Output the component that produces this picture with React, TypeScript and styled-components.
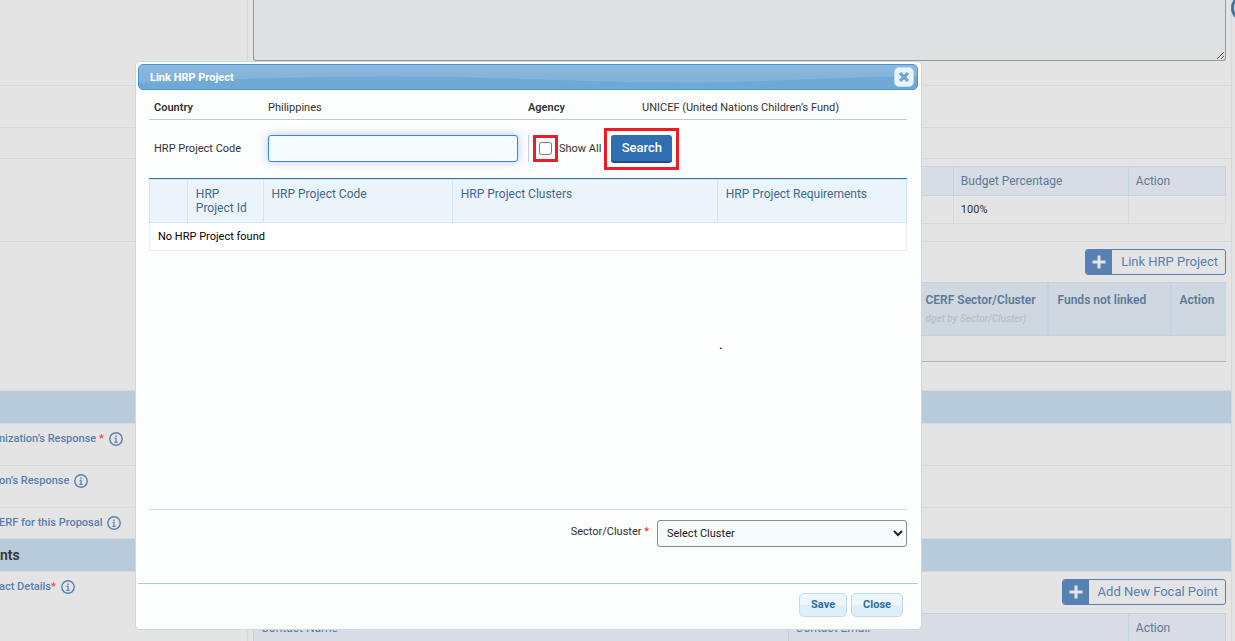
import React from "react";
import styled, { createGlobalStyle } from "styled-components";

const GlobalStyle = createGlobalStyle`
  *, *::before, *::after { box-sizing: border-box; }
  body {
    margin: 0;
    overflow: hidden;
    background: #e4e4e4;
    color: #333;
    font: 11px/14px Roboto, "Liberation Sans", sans-serif;
  }
  button, input, select, textarea { font: inherit; margin: 0; }
  table { border-collapse: collapse; }
`;

const line = "#d8d8d8";

/* ---------- Proposal form behind the dialog ---------- */

const Page = styled.main`
  position: relative;
  height: 100vh;
  overflow: hidden;
  padding-right: 3px;
`;

const Form = styled.form`
  border-right: 1px solid ${line};
`;

const Row = styled.div<{ $height: number }>`
  display: grid;
  grid-template-columns: 248px 1fr;
  min-height: ${(p) => p.$height}px;
  border-bottom: 1px solid ${line};
`;

const LabelCell = styled.div`
  display: flex;
  align-items: flex-start;
  padding-top: 8px;
  border-right: 1px solid ${line};
`;

const FieldLabel = styled.span`
  margin-left: -1px;
  color: #5681b2;
  font-weight: 500;
`;

const Required = styled.span<{ $muted?: boolean }>`
  color: ${(p) => (p.$muted ? "#f0484c" : "#fb2020")};
`;

const Field = styled.div`
  display: flex;
  flex-direction: column;
  padding: 7px 5px 0;
`;

const FlushField = styled(Field)`
  padding-top: 0;
`;

const SectionBand = styled.h2`
  height: 33px;
  margin: 0;
  background: #b8cbdb;
  border-bottom: 1px solid ${line};
  color: #333;
  font-size: 14px;
  font-weight: 600;
  line-height: 32px;
`;

const Narrative = styled.textarea`
  display: block;
  width: 100%;
  height: 61px;
  border: 1px solid #999;
  border-top: 0;
  border-radius: 0 0 3px 3px;
  background: #dde1e2;
`;

const FormTable = styled.table`
  width: 100%;
  table-layout: fixed;

  th, td {
    padding: 7px;
    border: 1px solid ${line};
    text-align: left;
    vertical-align: top;
    height: 28px;
  }
  td { padding: 7px 7px 6px; }
  th {
    height: 29px;
    border-color: #c5d3e0;
    background: #d8dce4;
    color: #5b7a98;
    font-size: 12px;
    font-weight: 400;
  }
`;

const FocalTable = styled(FormTable)`
  margin-top: 1px;
`;

const LinkedTable = styled(FormTable)`
  th {
    height: 53px;
    padding: 10px 8px 0 9px;
    border-width: 1px 2px;
    background: #cfd7e1;
    font-weight: 600;
  }
  th:first-child, th.joined { border-right-width: 0; border-left-width: 0; }
  th.joined { padding-left: 10px; }
  th:last-child { padding-left: 8px; border-right-width: 1px; }
  td {
    height: 26px;
    border-bottom-color: #b4b4b4;
    background: #e1e1e1;
  }
`;

const HeaderHint = styled.em`
  display: block;
  margin-top: 5px;
  color: #bcbfc2;
  font-size: 10px;
  font-weight: 500;
  white-space: nowrap;
`;

const AddButton = styled.button`
  display: flex;
  align-self: flex-end;
  height: 26px;
  margin-bottom: 7px;
  padding: 0;
  overflow: hidden;
  border: 1px solid #5681b2;
  border-radius: 3px;
  background: transparent;
  color: #5681b2;
  font-size: 13px;
  line-height: 23px;
`;

const AddIcon = styled.span`
  display: grid;
  place-items: center;
  width: 26px;
  height: 24px;
  background: #5681b2;
`;

const AddText = styled.span`
  padding: 0 7px 0 9px;
`;

const InfoButton = styled.button`
  display: flex;
  margin: 0 0 0 5px;
  padding: 0;
  border: 0;
  background: none;
`;

const HelpRing = styled.div`
  position: absolute;
  top: -6px;
  right: -24px;
  width: 28px;
  height: 28px;
  border: 3px solid #3d74a3;
  border-radius: 50%;
  background: #e4e4e4;
`;

/* ---------- Dialog ---------- */

const Overlay = styled.div`
  position: fixed;
  inset: 0;
  padding: 61px 0 0 135px;
`;

const Dialog = styled.section`
  width: 787px;
  max-width: 100%;
  padding: 2px 3px 3px 2px;
  border: 1px solid #c5dbec;
  border-radius: 5px;
  background: #fcfdfd;
`;

const TitleBar = styled.header`
  position: relative;
  display: flex;
  align-items: center;
  justify-content: space-between;
  height: 26px;
  padding: 0 3px 0 11px;
  overflow: hidden;
  border: 1px solid #4297d7;
  border-radius: 5px;
  background: #71a9d5;
`;

const Wave = styled.svg`
  position: absolute;
  inset: 0;
  width: 100%;
  height: 100%;
`;

const Title = styled.h1`
  position: relative;
  margin: 0;
  padding-top: 1px;
  color: #fff;
  font-size: 11px;
  font-weight: 700;
`;

const CloseIconButton = styled.button`
  position: relative;
  display: grid;
  place-items: center;
  width: 20px;
  height: 20px;
  padding: 0;
  border: 1px solid #c5dbec;
  border-radius: 5px;
  background: #e9f3fc;
`;

const Body = styled.div`
  padding: 5px 11px 0;
`;

const Summary = styled.dl`
  display: grid;
  grid-template-columns: 114px 260px 114px 1fr;
  margin: 0;
  padding: 6px 5px 4px;
  border-bottom: 1px solid #c8c8c8;

  dt { font-weight: 600; }
  dd { margin: 0; }
`;

const SearchBar = styled.div`
  display: flex;
  padding: 15px 5px;
`;

const SearchLabel = styled.label`
  width: 114px;
  line-height: 27px;
`;

const CodeInput = styled.input`
  width: 250px;
  height: 27px;
  padding: 0 9px;
  border: 1px solid #3b82f0;
  border-radius: 3px;
  outline: 0;
  background: #f6fbfb;
  box-shadow: 0 0 8px rgba(70, 120, 240, 0.4);
`;

const ShowAll = styled.label`
  display: flex;
  height: 27px;
  margin-left: 10px;
  padding-left: 4px;
  border-left: 1px solid #ccc;
  line-height: 27px;
`;

const CheckHighlight = styled.span`
  display: grid;
  place-items: center;
  width: 25px;
  height: 27px;
  margin-right: 1px;
  border: 3px solid #ed1c24;

  input { width: 13px; height: 13px; }
`;

const SearchHighlight = styled.span`
  height: 28px;
  margin-left: 10px;
  outline: 3px solid #ed1c24;
  outline-offset: 4px;
`;

const SearchButton = styled.button`
  width: 61px;
  height: 28px;
  padding: 0;
  border: 0;
  border-bottom: 2px solid #1f4e80;
  border-radius: 3px;
  background: #2f6eb1;
  color: #fff;
  font-size: 13px;
  font-weight: 500;
`;

const Results = styled.div`
  min-height: 332px;
  border-top: 1px solid #2f6eb1;
  border-bottom: 1px solid #d8dadb;
`;

const ResultTable = styled.table`
  width: 100%;
  table-layout: fixed;

  th, td {
    padding: 7px 7px 7px 8px;
    border: 1px solid #eee;
    text-align: left;
    vertical-align: top;
  }
  th {
    height: 43px;
    padding-bottom: 6px;
    border-color: #d0e5f5;
    background: #ebf3fb;
    color: #41698f;
    font-size: 12px;
    font-weight: 400;
  }
  td {
    background: #fff;
    padding-bottom: 6px;
    color: #000;
  }
`;

const Col = styled.col<{ $width?: string }>`
  width: ${(p) => p.$width ?? "auto"};
`;

const Marker = styled.p`
  margin: 86px 0 0;
  padding-left: 570px;
  color: #000;
  font-size: 14px;
`;

const ClusterBar = styled.div`
  display: flex;
  justify-content: flex-end;
  gap: 8px;
  padding: 10px 0 36px;
`;

const ClusterLabel = styled.label`
  line-height: 23px;
`;

const ClusterSelect = styled.select`
  width: 250px;
  height: 27px;
  padding: 0 5px;
  border: 1px solid #8a8a8a;
  border-radius: 3px;
  background: #f6fbfb;
  color: #222;
`;

const Footer = styled.footer`
  display: flex;
  justify-content: flex-end;
  gap: 4px;
  padding: 9px 15px 9px;
  border-top: 1px solid #a6c9e2;
`;

const FooterButton = styled.button`
  height: 24px;
  padding: 0 11px;
  border: 1px solid #c5dbec;
  border-radius: 5px;
  background: linear-gradient(#edf5fd 50%, #dfeefb 50%);
  color: #2e6e9e;
  font-weight: 700;
  line-height: 20px;
`;

function Info() {
  return (
    <InfoButton type="button" aria-label="More information">
      <svg width="14" height="14" viewBox="0 0 14 14" fill="none" stroke="#5681b2">
        <circle cx="7" cy="7" r="6.2" strokeWidth="1.4" />
        <path d="M7 3.4v1.5" strokeWidth="1.4" />
        <path d="M5.6 6.3H7v4.2M5.4 10.3h3.2" strokeWidth="1.2" />
      </svg>
    </InfoButton>
  );
}

function Add({ children }: { children: string }) {
  return (
    <AddButton type="button">
      <AddIcon>
        <svg width="14" height="14" viewBox="0 0 14 14" stroke="#e4e4e4" strokeWidth="3">
          <path d="M7 .5v13M.5 7h13" />
        </svg>
      </AddIcon>
      <AddText>{children}</AddText>
    </AddButton>
  );
}

function LabelRow({ height, text, mark }: { height: number; text?: string; mark?: string }) {
  return (
    <Row $height={height}>
      <LabelCell>
        {text && (
          <>
            <FieldLabel>
              {text}
              {mark && <Required $muted>{mark}</Required>}
            </FieldLabel>
            <Info />
          </>
        )}
      </LabelCell>
      <Field />
    </Row>
  );
}

function ProposalForm() {
  return (
    <Form>
      <Row $height={86}>
        <LabelCell />
        <FlushField>
          <Narrative aria-label="Narrative" />
        </FlushField>
      </Row>
      <LabelRow height={42} />
      <LabelRow height={31} />
      <Row $height={83}>
        <LabelCell />
        <Field>
          <FormTable>
            <colgroup>
              <Col $width="72%" />
              <Col $width="18%" />
              <Col $width="10%" />
            </colgroup>
            <thead>
              <tr>
                <th />
                <th>Budget Percentage</th>
                <th>Action</th>
              </tr>
            </thead>
            <tbody>
              <tr>
                <td />
                <td>100%</td>
                <td />
              </tr>
            </tbody>
          </FormTable>
        </Field>
      </Row>
      <Row $height={149}>
        <LabelCell />
        <Field>
          <Add>Link HRP Project</Add>
          <LinkedTable>
            <colgroup>
              <Col />
              <Col $width="132px" />
              <Col $width="123px" />
              <Col $width="55px" />
            </colgroup>
            <thead>
              <tr>
                <th />
                <th className="joined">
                  CERF Sector/Cluster
                  <HeaderHint>dget by Sector/Cluster)</HeaderHint>
                </th>
                <th>Funds not linked</th>
                <th>Action</th>
              </tr>
            </thead>
            <tbody>
              <tr>
                <td colSpan={4} />
              </tr>
            </tbody>
          </LinkedTable>
        </Field>
      </Row>
      <SectionBand />
      <LabelRow height={42} text="nization’s Response " mark="*" />
      <LabelRow height={42} text="on’s Response" />
      <LabelRow height={31} text="ERF for this Proposal" />
      <SectionBand>nts</SectionBand>
      <Row $height={100}>
        <LabelCell>
          <FieldLabel>
            act Details<Required $muted>*</Required>
          </FieldLabel>
          <Info />
        </LabelCell>
        <Field>
          <Add>Add New Focal Point</Add>
          <FocalTable>
            <colgroup>
              <Col $width="55%" />
              <Col $width="35%" />
              <Col $width="10%" />
            </colgroup>
            <thead>
              <tr>
                <th>Contact Name</th>
                <th>Contact Email</th>
                <th>Action</th>
              </tr>
            </thead>
          </FocalTable>
        </Field>
      </Row>
    </Form>
  );
}

function LinkProjectDialog() {
  return (
    <Dialog role="dialog" aria-labelledby="dialog-title">
      <TitleBar>
        <Wave viewBox="0 0 778 24" preserveAspectRatio="none" aria-hidden="true">
          <defs>
            <linearGradient id="gloss" x1="0" y1="0" x2="0" y2="1">
              <stop offset="0" stopColor="#8cb8dd" />
              <stop offset="1" stopColor="#80b2da" />
            </linearGradient>
          </defs>
          <path
            d="M0 18C100 13 190 11.500 262 11.500C360 11.500 450 17.500 540 17.500C630 17.500 690 11.500 778 11.500V0H0Z"
            fill="url(#gloss)"
          />
        </Wave>
        <Title id="dialog-title">Link HRP Project</Title>
        <CloseIconButton type="button" aria-label="Close dialog">
          <svg width="10" height="10" viewBox="0 0 10 10" stroke="#6da8d5" strokeWidth="3.2">
            <path d="M1 1l8 8M9 1l-8 8" />
          </svg>
        </CloseIconButton>
      </TitleBar>
      <Body>
        <Summary>
          <dt>Country</dt>
          <dd>Philippines</dd>
          <dt>Agency</dt>
          <dd>UNICEF (United Nations Children’s Fund)</dd>
        </Summary>
        <SearchBar>
          <SearchLabel htmlFor="project-code">HRP Project Code</SearchLabel>
          <CodeInput id="project-code" type="text" />
          <ShowAll>
            <CheckHighlight>
              <input type="checkbox" />
            </CheckHighlight>
            Show All
          </ShowAll>
          <SearchHighlight>
            <SearchButton type="button">Search</SearchButton>
          </SearchHighlight>
        </SearchBar>
        <Results>
          <ResultTable>
            <colgroup>
              <Col $width="5%" />
              <Col $width="10%" />
              <Col $width="25%" />
              <Col $width="35%" />
              <Col $width="25%" />
            </colgroup>
            <thead>
              <tr>
                <th />
                <th>HRP Project Id</th>
                <th>HRP Project Code</th>
                <th>HRP Project Clusters</th>
                <th>HRP Project Requirements</th>
              </tr>
            </thead>
            <tbody>
              <tr>
                <td colSpan={5}>No HRP Project found</td>
              </tr>
            </tbody>
          </ResultTable>
          <Marker>.</Marker>
        </Results>
        <ClusterBar>
          <ClusterLabel htmlFor="cluster">
            Sector/Cluster <Required>*</Required>
          </ClusterLabel>
          <ClusterSelect id="cluster">
            <option>Select Cluster</option>
          </ClusterSelect>
        </ClusterBar>
      </Body>
      <Footer>
        <FooterButton type="button">Save</FooterButton>
        <FooterButton type="button">Close</FooterButton>
      </Footer>
    </Dialog>
  );
}

export default function App() {
  return (
    <>
      <GlobalStyle />
      <Page>
        <ProposalForm />
        <HelpRing />
      </Page>
      <Overlay>
        <LinkProjectDialog />
      </Overlay>
    </>
  );
}
